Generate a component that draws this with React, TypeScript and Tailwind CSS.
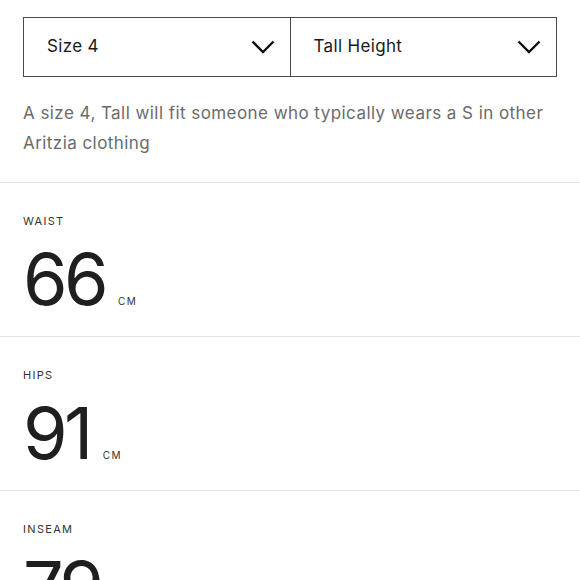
import React from 'react';

const font = { fontFamily: 'Inter, "Liberation Sans", sans-serif' };

function Chevron() {
  return (
    <svg width="24" height="14" viewBox="0 0 24 14" fill="none" className="shrink-0">
      <path d="M1.5 1.5 L12 12 L22.5 1.5" stroke="#111" strokeWidth="2.4" />
    </svg>
  );
}

function Select({ label, last }: { label: string; last?: boolean }) {
  return (
    <div
      className={`flex-1 h-full flex items-center justify-between pl-[23px] pr-[15px] ${
        last ? '' : 'border-r border-[#4a4a4a]'
      }`}
    >
      <span className="text-[17px] tracking-[0.02em] text-[#1a1a1a]">{label}</span>
      <Chevron />
    </div>
  );
}

function Measure({ label, value }: { label: string; value: string }) {
  return (
    <div className="border-t border-[#e6e6e6] pt-[30px] pb-[21px] px-[23px]">
      <div className="text-[11px] leading-4 tracking-[0.12em] text-[#333]">{label}</div>
      <div className="flex items-baseline gap-[13px] mt-[14px]">
        <span className="text-[72px] leading-none tracking-[-0.05em] text-[#1f1f1f]">{value}</span>
        <span className="text-[10px] tracking-[0.14em] text-[#333]">CM</span>
      </div>
    </div>
  );
}

export default function App() {
  return (
    <div className="w-[580px] h-[580px] overflow-hidden bg-white" style={font}>
      <div className="px-[23px] pt-[17px]">
        <div className="flex h-[60px] border border-[#4a4a4a]">
          <Select label="Size 4" />
          <Select label="Tall Height" last />
        </div>
        <p className="mt-[21px] mb-[24px] text-[17px] leading-[30px] tracking-[0.026em] text-[#6b6b6b]">
          A size 4, Tall will fit someone who typically wears a S in other Aritzia clothing
        </p>
      </div>
      <Measure label="WAIST" value="66" />
      <Measure label="HIPS" value="91" />
      <Measure label="INSEAM" value="79" />
    </div>
  );
}
